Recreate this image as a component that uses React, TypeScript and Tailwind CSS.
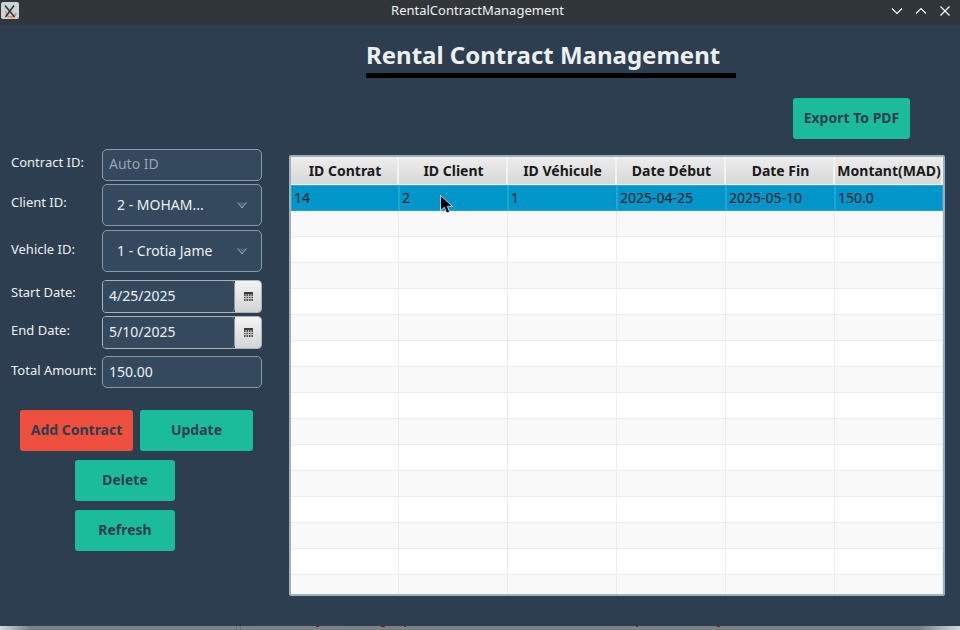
const columns = ["ID Contrat", "ID Client", "ID Véhicule", "Date Début", "Date Fin", "Montant(MAD)"];
const selected = ["14", "2", "1", "2025-04-25", "2025-05-10", "150.0"];
const emptyRows = Array.from({ length: 15 }, (_, i) => i);

const fieldClass = "flex items-center rounded-[5px] border border-[#8a9aa5] bg-[#34495e] text-[14px]";
const labelClass = "w-[102px] shrink-0 pl-[11px] text-[13px] leading-[18px] text-[#ecf0f1]";
const actionClass =
  "flex h-[41px] items-center justify-center rounded-[3px] pb-[2px] text-[14px] font-bold text-[#2c3e50]";

function Chevron() {
  return (
    <svg width="10" height="7" viewBox="0 0 10 7" className="ml-auto mr-[14px] mt-[2px]">
      <path d="M0.5 0.5 L5 6 L9.5 0.5" fill="#4f6272" stroke="#9aa6ad" strokeWidth="1" />
    </svg>
  );
}

function DateField({ value }: { value: string }) {
  return (
    <div className="flex h-[33px] w-[160px] overflow-hidden rounded-[4px] border border-[#a9b4ba]">
      <div className="flex flex-1 items-center rounded-r-[4px] border-r border-[#8a9aa5] bg-[#34495e] pb-[2px] pl-[6px] text-[14px] text-[#ecf0f1]">
        {value}
      </div>
      <div className="flex w-[26px] items-center justify-center bg-gradient-to-b from-[#f4f4f4] to-[#d4d4d4]">
        <svg width="9" height="9" viewBox="0 0 9 9">
          <rect width="9" height="2" fill="#3c3c3c" />
          <rect y="2" width="9" height="7" fill="#555555" />
          <path d="M0 4.5H9M0 6.5H9M2 2V9M4.5 2V9M7 2V9" stroke="#d8d8d8" strokeWidth="0.8" />
        </svg>
      </div>
    </div>
  );
}

function FormRow({ label, gap, labelPad, children }: { label: string; gap: string; labelPad: string; children: React.ReactNode }) {
  return (
    <div className={`flex ${gap}`}>
      <span className={`${labelClass} ${labelPad}`}>{label}</span>
      {children}
    </div>
  );
}

export default function App() {
  return (
    <div
      className="relative flex h-[630px] w-[960px] flex-col overflow-hidden bg-[#2c3e50]"
      style={{ fontFamily: '"Noto Sans", sans-serif' }}
    >
      {/* Title bar */}
      <div className="relative flex h-[25px] shrink-0 items-center justify-center bg-[#31363b] pb-[3px] pr-[5px] text-[13px] text-[#eff0f1]">
        <div className="absolute left-[1px] top-[2px] flex h-[17px] w-[18px] items-center justify-center rounded-[2px] bg-[#cfd2d4]">
          <svg width="14" height="14" viewBox="0 0 14 14">
            <path d="M3 7 A5 5 0 0 0 8 13 A5 5 0 0 0 13 9" fill="none" stroke="#e8824a" strokeWidth="1.5" />
            <path d="M2 1.5 L11.5 13 M11 1.5 L2.5 13" stroke="#333b44" strokeWidth="1.7" />
          </svg>
        </div>
        RentalContractManagement
        <div className="absolute right-[9px] top-[5px] flex gap-[12px]">
          <svg width="12" height="12" viewBox="0 0 12 12">
            <path d="M1 3.5 L6 8.5 L11 3.5" fill="none" stroke="#fcfcfc" strokeWidth="1.1" />
          </svg>
          <svg width="12" height="12" viewBox="0 0 12 12">
            <path d="M1 8.5 L6 3.5 L11 8.5" fill="none" stroke="#fcfcfc" strokeWidth="1.1" />
          </svg>
          <svg width="12" height="12" viewBox="0 0 12 12">
            <path d="M1.5 1.5 L10.5 10.5 M10.5 1.5 L1.5 10.5" fill="none" stroke="#fcfcfc" strokeWidth="1.2" />
          </svg>
        </div>
      </div>

      <div className="flex flex-1">
        {/* Form column */}
        <div className="w-[289px] shrink-0 pt-[124px]">
          <FormRow label="Contract ID:" gap="" labelPad="pt-[4px]">
            <div className={`${fieldClass} h-[32px] w-[160px] pb-[3px] pl-[6px] text-[#97a5ae]`}>Auto ID</div>
          </FormRow>
          <FormRow label="Client ID:" gap="mt-[3px]" labelPad="pt-[9px]">
            <div className={`${fieldClass} h-[42px] w-[160px] pb-[2px] pl-[14px] text-[#ecf0f1]`}>
              2 - MOHAM...
              <Chevron />
            </div>
          </FormRow>
          <FormRow label="Vehicle ID:" gap="mt-[4px]" labelPad="pt-[10px]">
            <div className={`${fieldClass} h-[42px] w-[160px] pb-[2px] pl-[14px] text-[#ecf0f1]`}>
              1 - Crotia Jame
              <Chevron />
            </div>
          </FormRow>
          <FormRow label="Start Date:" gap="mt-[8px]" labelPad="pt-[3px]">
            <DateField value="4/25/2025" />
          </FormRow>
          <FormRow label="End Date:" gap="mt-[3px]" labelPad="pt-[5px]">
            <DateField value="5/10/2025" />
          </FormRow>
          <FormRow label="Total Amount:" gap="mt-[7px]" labelPad="pt-[5px]">
            <div className={`${fieldClass} h-[32px] w-[160px] pb-[2px] pl-[6px] text-[#ecf0f1]`}>150.00</div>
          </FormRow>

          <div className="ml-[20px] mt-[22px] flex gap-[7px]">
            <button className={`${actionClass} w-[113px] bg-[#ef4f3f]`}>Add Contract</button>
            <button className={`${actionClass} w-[113px] bg-[#1abc9c]`}>Update</button>
          </div>
          <div className="ml-[75px] mt-[9px] flex w-[100px] flex-col gap-[9px]">
            <button className={`${actionClass} bg-[#1abc9c]`}>Delete</button>
            <button className={`${actionClass} bg-[#1abc9c]`}>Refresh</button>
          </div>
        </div>

        {/* Right column */}
        <div className="flex-1">
          <div className="ml-[77px] mt-[13px] w-[370px] border-b-[5px] border-black pb-[1px] text-[24px] font-bold leading-[34px] text-[#ecf0f1]">
            Rental Contract Management
          </div>
          <div className="mt-[20px] flex justify-end pr-[50px]">
            <button className={`${actionClass} w-[117px] bg-[#1abc9c]`}>Export To PDF</button>
          </div>

          <div className="mt-[16px] h-[441px] w-[656px] overflow-hidden rounded-[2px] border-2 border-[#9fb0bb] bg-white">
            <div className="grid h-[28px] grid-cols-[108px_109px_109px_109px_109px_1fr] border-b border-[#f0f0f0]">
              {columns.map((c) => (
                <div
                  key={c}
                  className="flex items-center justify-center whitespace-nowrap border-r-2 border-[#f3f3f3] bg-gradient-to-b from-[#ededed] to-[#d8d8d8] pl-[2px] text-[14px] font-bold text-[#1a1a1a]"
                >
                  {c}
                </div>
              ))}
            </div>
            <div className="grid h-[26px] grid-cols-[108px_109px_109px_109px_109px_1fr] bg-[#0096c9]">
              {selected.map((v) => (
                <div key={v} className="flex items-center border border-[#1ea6d4] pb-[2px] pl-[2px] text-[14px] text-[#1a1a1a]">
                  {v}
                </div>
              ))}
            </div>
            {emptyRows.map((r) => (
              <div
                key={r}
                className={`grid h-[26px] grid-cols-[108px_109px_109px_109px_109px_1fr] border-b border-[#ececec] ${
                  r % 2 === 0 ? "bg-[#f9f9f9]" : "bg-white"
                }`}
              >
                {columns.map((c) => (
                  <div key={c} className="border-r border-[#ececec]" />
                ))}
              </div>
            ))}
          </div>
        </div>
      </div>

      {/* Strip of the desktop below the window */}
      <div className="relative h-[4px] shrink-0 bg-[linear-gradient(to_right,#d8d8d8,#808080_30px,#7f7f7f_920px,#d8d8d8)]">
        <div className="absolute left-[236px] top-0 h-full w-[1px] bg-[#6c6c6c]" />
        <div className="absolute left-[240px] top-0 h-full w-[1px] bg-[#6c6c6c]" />
        <div className="absolute left-[316px] top-0 h-[1px] w-[3px] bg-[#8e1116]" />
        <div className="absolute left-[381px] top-0 h-[1px] w-[4px] bg-[#8e1116]" />
        <div className="absolute left-[404px] top-0 h-[1px] w-[2px] bg-[#8e1116]" />
        <div className="absolute left-[636px] top-0 h-[1px] w-[2px] bg-[#8e1116]" />
        <div className="absolute left-[717px] top-0 h-[1px] w-[3px] bg-[#8e1116]" />
      </div>

      {/* Mouse pointer */}
      <svg width="15" height="20" viewBox="0 0 15 20" className="absolute left-[440px] top-[195px]">
        <path d="M0.5 0.5 L0.5 15.5 L4.4 12.2 L6.6 18 L9.6 16.8 L7.4 11.4 L12.5 11.4 Z" fill="#000000" stroke="#ffffff" strokeWidth="0.7" />
      </svg>
    </div>
  );
}
